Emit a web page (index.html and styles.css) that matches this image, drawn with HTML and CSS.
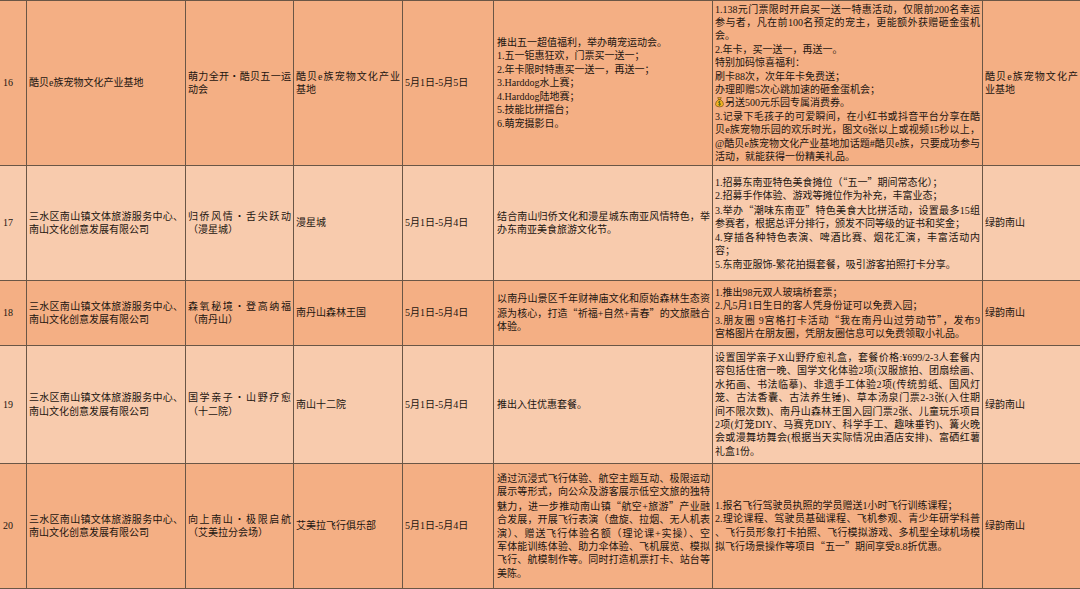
FILE: index.html
```html
<!DOCTYPE html>
<html lang="zh-CN">
<head>
<meta charset="utf-8">
<title>五一活动表</title>
<link rel="stylesheet" href="styles.css">
</head>
<body>
<div class="sheet">
  <div class="row dark r16">
    <div class="c"><p>16</p></div>
    <div class="c"><p>酷贝e族宠物文化产业基地</p></div>
    <div class="c"><div class="t"><p class="j">萌力全开・酷贝五一运</p><p>动会</p></div></div>
    <div class="c"><div class="t"><p class="j">酷贝e族宠物文化产业</p><p>基地</p></div></div>
    <div class="c"><p>5月1日-5月5日</p></div>
    <div class="c desc"><div class="t">
      <p>推出五一超值福利，举办萌宠运动会。</p>
      <p>1.五一钜惠狂欢，门票买一送一；</p>
      <p>2.年卡限时特惠买一送一，再送一；</p>
      <p>3.Harddog水上赛；</p>
      <p>4.Harddog陆地赛；</p>
      <p>5.技能比拼擂台；</p>
      <p>6.萌宠摄影日。</p>
    </div></div>
    <div class="c"><div class="t">
      <p class="j">1.138元门票限时开启买一送一特惠活动，仅限前200名幸运</p>
      <p class="j">参与者，凡在前100名预定的宠主，更能额外获赠砸金蛋机</p>
      <p>会。</p>
      <p>2.年卡，买一送一，再送一。</p>
      <p>特别加码惊喜福利：</p>
      <p>刷卡88次，次年年卡免费送；</p>
      <p>办理即赠5次心跳加速的砸金蛋机会；</p>
      <p><svg class="bag" viewBox="0 0 10 12" width="9" height="12" aria-hidden="true"><path d="M3 1.1 L7 1.1 L6 3.3 Q9.6 5.4 9.4 8.8 Q9.2 11.4 5 11.4 Q0.8 11.4 0.6 8.8 Q0.4 5.4 4 3.3 Z" fill="#f5b423" stroke="#6a4510" stroke-width="0.7"/><path d="M3.6 3.3 H6.4" stroke="#6a4510" stroke-width="0.8"/><path d="M6.3 6.1 Q6 5.4 5 5.4 Q3.8 5.4 3.9 6.4 Q4 7.2 5 7.3 Q6.2 7.4 6.2 8.4 Q6.2 9.5 5 9.5 Q3.9 9.5 3.7 8.6 M5 4.7 V10.1" stroke="#3f5d1c" fill="none" stroke-width="0.8"/></svg>另送500元乐园专属消费券。</p>
      <p class="j">3.记录下毛孩子的可爱瞬间，在小红书或抖音平台分享在酷</p>
      <p class="j">贝e族宠物乐园的欢乐时光，图文6张以上或视频15秒以上，</p>
      <p class="j">@酷贝e族宠物文化产业基地加话题#酷贝e族，只要成功参与</p>
      <p>活动，就能获得一份精美礼品。</p>
    </div></div>
    <div class="c"><div class="t"><p class="j">酷贝e族宠物文化产</p><p>业基地</p></div></div>
  </div>

  <div class="row light r17">
    <div class="c"><p>17</p></div>
    <div class="c"><div class="t"><p class="j">三水区南山镇文体旅游服务中心、</p><p>南山文化创意发展有限公司</p></div></div>
    <div class="c"><div class="t"><p class="j">归侨风情・舌尖跃动</p><p>（漫星城）</p></div></div>
    <div class="c"><p>漫星城</p></div>
    <div class="c"><p>5月1日-5月4日</p></div>
    <div class="c desc"><div class="t"><p class="j">结合南山归侨文化和漫星城东南亚风情特色，举</p><p>办东南亚美食旅游文化节。</p></div></div>
    <div class="c"><div class="t">
      <p>1.招募东南亚特色美食摊位（<span class="q">“</span>五一<span class="q">”</span>期间常态化）；</p>
      <p>2.招募手作体验、游戏等摊位作为补充，丰富业态；</p>
      <p class="j">3.举办<span class="q">“</span>潮味东南亚<span class="q">”</span>特色美食大比拼活动，设置最多15组</p>
      <p>参赛者，根据总评分排行，颁发不同等级的证书和奖金；</p>
      <p class="j">4.穿插各种特色表演、啤酒比赛、烟花汇演，丰富活动内</p>
      <p>容；</p>
      <p>5.东南亚服饰-繁花拍摄套餐，吸引游客拍照打卡分享。</p>
    </div></div>
    <div class="c"><p>绿韵南山</p></div>
  </div>

  <div class="row dark r18">
    <div class="c"><p>18</p></div>
    <div class="c"><div class="t"><p class="j">三水区南山镇文体旅游服务中心、</p><p>南山文化创意发展有限公司</p></div></div>
    <div class="c"><div class="t"><p class="j">森氧秘境・登高纳福</p><p>（南丹山）</p></div></div>
    <div class="c"><p>南丹山森林王国</p></div>
    <div class="c"><p>5月1日-5月4日</p></div>
    <div class="c desc"><div class="t">
      <p class="j">以南丹山景区千年财神庙文化和原始森林生态资</p>
      <p class="j">源为核心，打造<span class="q">“</span>祈福+自然+青春<span class="q">”</span>的文旅融合</p>
      <p>体验。</p>
    </div></div>
    <div class="c"><div class="t">
      <p>1.推出98元双人玻璃桥套票；</p>
      <p>2.凡5月1日生日的客人凭身份证可以免费入园；</p>
      <p class="j">3.朋友圈 9宫格打卡活动<span class="q">“</span>我在南丹山过劳动节<span class="q">”</span>，发布9</p>
      <p>宫格图片在朋友圈，凭朋友圈信息可以免费领取小礼品。</p>
    </div></div>
    <div class="c"><p>绿韵南山</p></div>
  </div>

  <div class="row light r19">
    <div class="c"><p>19</p></div>
    <div class="c"><div class="t"><p class="j">三水区南山镇文体旅游服务中心、</p><p>南山文化创意发展有限公司</p></div></div>
    <div class="c"><div class="t"><p class="j">国学亲子・山野疗愈</p><p>（十二院）</p></div></div>
    <div class="c"><p>南山十二院</p></div>
    <div class="c"><p>5月1日-5月4日</p></div>
    <div class="c desc"><p>推出入住优惠套餐。</p></div>
    <div class="c"><div class="t">
      <p class="j">设置国学亲子X山野疗愈礼盒，套餐价格:¥699/2-3人套餐内</p>
      <p class="j">容包括住宿一晚、国学文化体验2项(汉服旅拍、团扇绘画、</p>
      <p class="j">水拓画、书法临摹)、非遗手工体验2项(传统剪纸、国风灯</p>
      <p class="j">笼、古法香囊、古法养生锤)、草本汤泉门票2-3张(入住期</p>
      <p class="j">间不限次数)、南丹山森林王国入园门票2张、儿童玩乐项目</p>
      <p class="j">2项(灯笼DIY、马赛克DIY、科学手工、趣味垂钓)、篝火晚</p>
      <p class="j">会或漫舞坊舞会(根据当天实际情况由酒店安排)、富硒红薯</p>
      <p>礼盒1份。</p>
    </div></div>
    <div class="c"><p>绿韵南山</p></div>
  </div>

  <div class="row dark r20">
    <div class="c"><p>20</p></div>
    <div class="c"><div class="t"><p class="j">三水区南山镇文体旅游服务中心、</p><p>南山文化创意发展有限公司</p></div></div>
    <div class="c"><div class="t"><p class="j">向上南山・极限启航</p><p>（艾美拉分会场）</p></div></div>
    <div class="c"><p>艾美拉飞行俱乐部</p></div>
    <div class="c"><p>5月1日-5月4日</p></div>
    <div class="c desc"><div class="t">
      <p class="j">通过沉浸式飞行体验、航空主题互动、极限运动</p>
      <p class="j">展示等形式，向公众及游客展示低空文旅的独特</p>
      <p class="j">魅力，进一步推动南山镇<span class="q">“</span>航空+旅游<span class="q">”</span>产业融</p>
      <p class="j">合发展，开展飞行表演（盘旋、拉烟、无人机表</p>
      <p class="j">演）、赠送飞行体验名额（理论课+实操）、空</p>
      <p class="j">军体能训练体验、助力伞体验、飞机展览、模拟</p>
      <p class="j">飞行、航模制作等。同时打造机票打卡、站台等</p>
      <p>美陈。</p>
    </div></div>
    <div class="c"><div class="t">
      <p>1.报名飞行驾驶员执照的学员赠送1小时飞行训练课程；</p>
      <p class="j">2.理论课程、驾驶员基础课程、飞机参观、青少年研学科普</p>
      <p class="j">、飞行员形象打卡拍照、飞行模拟游戏、多机型全球机场模</p>
      <p>拟飞行场景操作等项目<span class="q">“</span>五一<span class="q">”</span>期间享受8.8折优惠。</p>
    </div></div>
    <div class="c"><p>绿韵南山</p></div>
  </div>
</div>
</body>
</html>
```

FILE: styles.css
```css
html, body {
  margin: 0;
  padding: 0;
  background: #ffffff;
}

body {
  font-family: "Liberation Serif", "Noto Sans CJK SC", serif;
  font-size: 10px;
  color: #1c1510;
  width: 1080px;
  height: 589px;
  overflow: hidden;
}

.sheet {
  width: 1080px;
  height: 589px;
  border-top: 1px solid #6a5646;
  box-sizing: border-box;
  overflow: hidden;
}

.row {
  display: grid;
  grid-template-columns: 27px 159px 108px 109px 91px 219px 270px 97px;
}

.dark { background: #f4af84; }
.light { background: #f8cbad; }

.r16 { height: 165px; }
.r17 { height: 115px; }
.r18 { height: 65px; }
.r19 { height: 118px; }
.r20 { height: 125px; }

.c {
  box-sizing: border-box;
  display: flex;
  align-items: center;
  padding: 0 2px 0 2px;
  border-right: 1px solid #6a5646;
  border-bottom: 1px solid #6a5646;
  line-height: 13.4px;
  overflow: hidden;
  min-width: 0;
}

.c:first-child { padding-left: 3px; }
.c:last-child { border-right: none; }
.desc { padding-left: 3px; }

.t { width: 100%; }

.c p {
  margin: 0;
  white-space: nowrap;
}

.c p.j {
  text-align: justify;
  text-align-last: justify;
}

.q {
  font-family: "Noto Sans CJK SC", sans-serif;
}

.bag {
  vertical-align: -2px;
  margin-right: 1px;
}
```
